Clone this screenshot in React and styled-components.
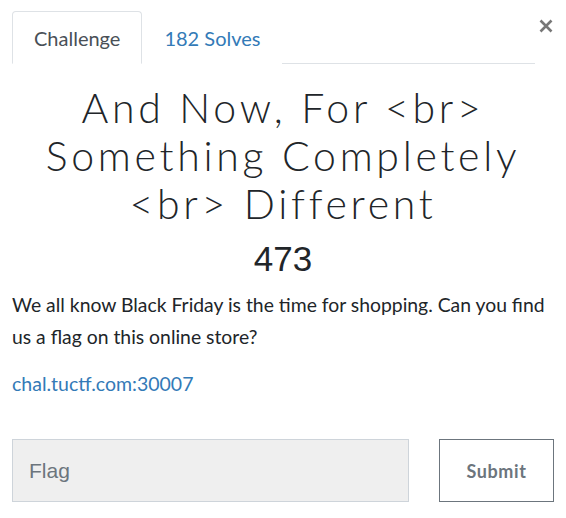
import React from 'react'
import styled, { createGlobalStyle } from 'styled-components'

const GlobalStyle = createGlobalStyle`
  html, body {
    margin: 0;
    padding: 0;
    background: #fff;
  }
  body {
    font-family: 'Lato', 'Liberation Sans', sans-serif;
    color: #212529;
  }
`

const Modal = styled.div`
  width: 566px;
  height: 518px;
  box-sizing: border-box;
  padding: 11px 12px 0 12px;
`

const Header = styled.div`
  display: flex;
  align-items: flex-start;
`

const Tabs = styled.div`
  flex: 1;
  display: flex;
  border-bottom: 1px solid #dee2e6;
`

const Tab = styled.div`
  height: 53px;
  box-sizing: border-box;
  display: flex;
  align-items: center;
  padding: 0 21px;
  font-size: 20px;
  margin-bottom: -1px;
  border: 1px solid ${p => (p.active ? '#dee2e6' : 'transparent')};
  border-bottom-color: ${p => (p.active ? '#fff' : 'transparent')};
  border-radius: 4px 4px 0 0;
  background: #fff;
  color: ${p => (p.active ? '#495057' : '#337ab7')};
`

const Close = styled.button`
  width: 17px;
  margin: 8px 0 0 2px;
  padding: 0;
  border: none;
  background: none;
  display: flex;
  justify-content: center;
  cursor: pointer;
`

const Title = styled.h1`
  margin: 20px 0 0;
  font-family: 'Lato', sans-serif;
  font-weight: 300;
  font-size: 41px;
  line-height: 48px;
  letter-spacing: 3.7px;
  text-align: center;
  color: #212529;
`

const Value = styled.div`
  margin-top: 10px;
  font-family: 'Liberation Sans', Arial, sans-serif;
  font-size: 35px;
  line-height: 42px;
  text-align: center;
  color: #212529;
`

const Description = styled.p`
  margin: 9px 0 0;
  font-size: 19.35px;
  line-height: 32px;
  color: #212529;
`

const Link = styled.a`
  display: block;
  margin-top: 15px;
  font-size: 19.5px;
  line-height: 32px;
  color: #337ab7;
  text-decoration: none;
`

const Form = styled.div`
  display: flex;
  gap: 30px;
  margin-top: 39px;
`

const Input = styled.input`
  width: 397px;
  height: 63px;
  box-sizing: border-box;
  padding: 0 16px;
  background: #efefef;
  border: 1px solid #ced4da;
  font-family: 'Liberation Sans', Arial, sans-serif;
  font-size: 21px;
  color: #495057;
  outline: none;
  &::placeholder {
    color: #6c757d;
  }
`

const Submit = styled.button`
  width: 115px;
  height: 63px;
  box-sizing: border-box;
  background: #fff;
  border: 1px solid #6c757d;
  font-family: 'Lato', sans-serif;
  font-weight: 700;
  font-size: 18px;
  letter-spacing: 0.6px;
  color: #6c757d;
  cursor: pointer;
`

export default function App() {
  return (
    <Modal>
      <GlobalStyle />
      <Header>
        <Tabs>
          <Tab active>Challenge</Tab>
          <Tab>182 Solves</Tab>
        </Tabs>
        <Close aria-label="Close">
          <svg width="14" height="14" viewBox="0 0 14 14">
            <path d="M1.5 1.5 L12.5 12.5 M12.5 1.5 L1.5 12.5" stroke="#777" strokeWidth="2.6" />
          </svg>
        </Close>
      </Header>
      <Title>
        And Now, For &lt;br&gt;
        <br />
        Something Completely
        <br />
        &lt;br&gt; Different
      </Title>
      <Value>473</Value>
      <Description>
        We all know Black Friday is the time for shopping. Can you find us a flag on this online store?
      </Description>
      <Link href="#">chal.tuctf.com:30007</Link>
      <Form>
        <Input placeholder="Flag" />
        <Submit>Submit</Submit>
      </Form>
    </Modal>
  )
}
